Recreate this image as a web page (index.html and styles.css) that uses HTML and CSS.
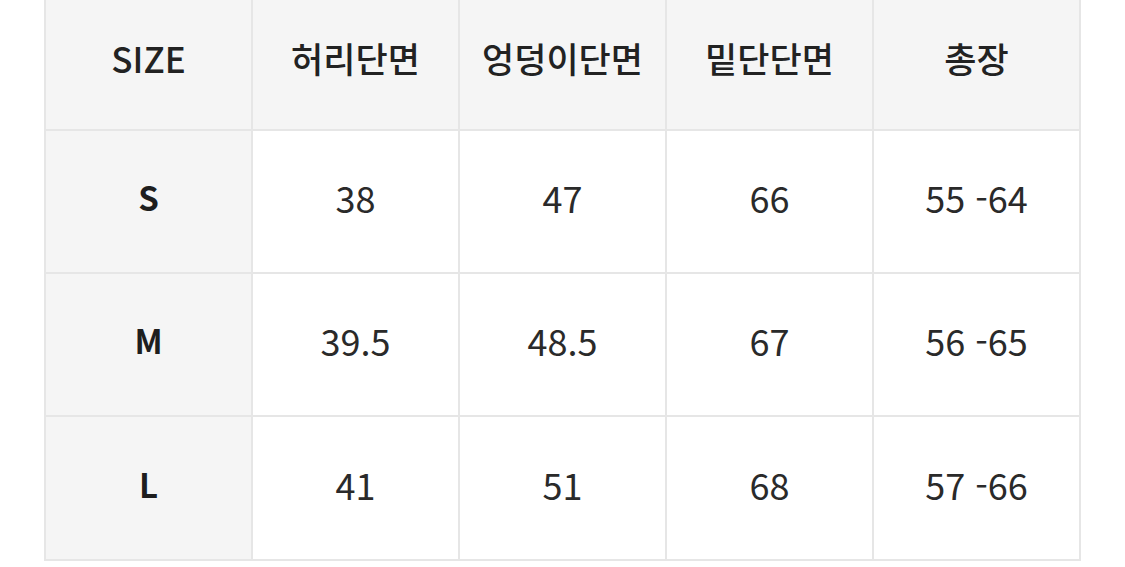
FILE: index.html
```html
<!DOCTYPE html>
<html lang="ko">
<head>
<meta charset="utf-8">
<link rel="stylesheet" href="styles.css">
</head>
<body>
<div class="page">
  <div class="table">
    <div class="cell head">SIZE</div>
    <div class="cell head">허리단면</div>
    <div class="cell head">엉덩이단면</div>
    <div class="cell head">밑단단면</div>
    <div class="cell head">총장</div>

    <div class="cell side">S</div>
    <div class="cell">38</div>
    <div class="cell">47</div>
    <div class="cell">66</div>
    <div class="cell">55 -64</div>

    <div class="cell side">M</div>
    <div class="cell">39.5</div>
    <div class="cell">48.5</div>
    <div class="cell">67</div>
    <div class="cell">56 -65</div>

    <div class="cell side">L</div>
    <div class="cell">41</div>
    <div class="cell">51</div>
    <div class="cell">68</div>
    <div class="cell">57 -66</div>
  </div>
</div>
</body>
</html>
```
FILE: styles.css
```css
html, body {
  margin: 0;
  padding: 0;
  background: #ffffff;
}
.page {
  width: 1125px;
  padding-left: 44px;
  box-sizing: border-box;
}
.table {
  width: 1037px;
  box-sizing: border-box;
  display: grid;
  grid-template-columns: repeat(5, 1fr);
  grid-template-rows: 129px 141px 141px 142px;
  gap: 2px;
  padding: 0 2px 2px 2px;
  background: #e6e6e6;
}
.cell {
  background: #ffffff;
  display: flex;
  align-items: center;
  justify-content: center;
  padding-bottom: 9px;
  box-sizing: border-box;
  font-family: "Noto Sans CJK KR", "Noto Sans", sans-serif;
  font-size: 36px;
  color: #2a2a2a;
  font-weight: 400;
}
.head {
  background: #f5f5f5;
  font-weight: 500;
  font-size: 35px;
  color: #222222;
  padding-bottom: 15px;
}
.side {
  background: #f5f5f5;
  font-weight: 700;
  font-size: 33px;
  color: #1e1e1e;
}
```
